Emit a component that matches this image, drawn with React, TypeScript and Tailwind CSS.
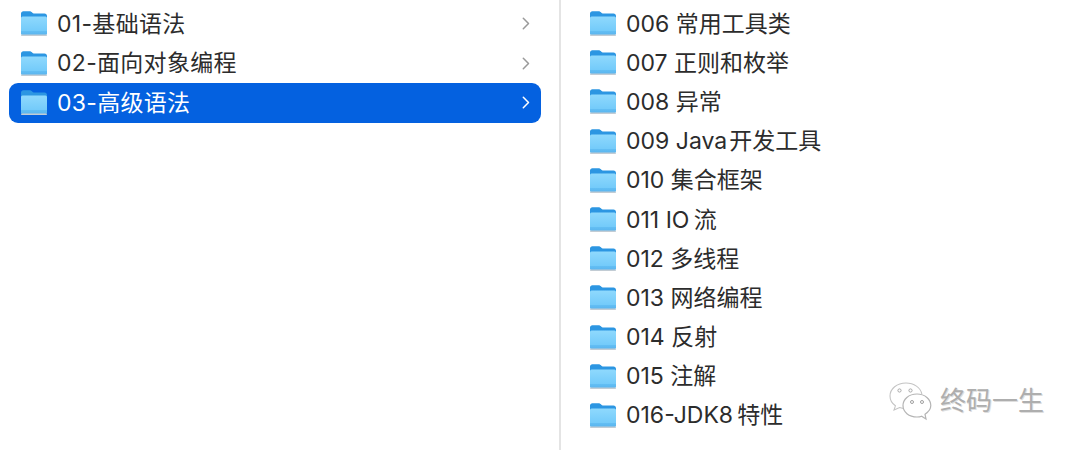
const leftItems = ["01-基础语法", "02-面向对象编程", "03-高级语法"];

const rightItems = [
  "006 常用工具类",
  "007 正则和枚举",
  "008 异常",
  "009 Java\u200a开发工具",
  "010 集合框架",
  "011 IO\u2009流",
  "012 多线程",
  "013 网络编程",
  "014 反射",
  "015 注解",
  "016-JDK8\u2009特性",
];

const fontStack = "[font-family:'Inter','Noto_Sans_CJK_SC',sans-serif]";

function FolderIcon() {
  return (
    <svg width="28" height="27" viewBox="0 0 28 27" className="shrink-0">
      <defs>
        <linearGradient id="folderBody" x1="0" y1="0" x2="0" y2="1">
          <stop offset="0" stopColor="#8fd9fd" />
          <stop offset="0.76" stopColor="#74cbfa" />
          <stop offset="0.78" stopColor="#63bff4" />
          <stop offset="1" stopColor="#5ab4ee" />
        </linearGradient>
      </defs>
      <path
        d="M1 3.6C1 2.2 2 1.2 3.4 1.2H9.5C10.8 1.2 11.4 1.8 12.2 2.6C12.8 3.2 13.3 3.6 14.4 3.6H24.5C26 3.6 27 4.6 27 6.1V12H1Z"
        fill="#2c96e2"
      />
      <rect x="1" y="6.4" width="26" height="18.6" rx="1.5" fill="url(#folderBody)" />
      <rect x="1" y="24.6" width="26" height="1.4" rx="0.7" fill="#c2ccd4" />
    </svg>
  );
}

function Chevron({ active }: { active: boolean }) {
  return (
    <svg width="8" height="13" viewBox="0 0 8 13" fill="none" className="shrink-0">
      <path
        d="M1.3 1.2L6.5 6.5L1.3 11.8"
        stroke={active ? "#ffffff" : "#9a9a9a"}
        strokeWidth="1.5"
        strokeLinecap="round"
        strokeLinejoin="round"
      />
    </svg>
  );
}

function WeChatIcon() {
  return (
    <svg width="44" height="40" viewBox="0 0 44 40" fill="none">
      <path
        d="M18 2C9 2 2 7.6 2 15C2 19 4 22.4 7.4 24.8L6 29L11.6 26.6C13.4 27.2 15.2 27.6 17 27.6"
        fill="#fff"
        stroke="#c4c4c4"
        strokeWidth="1.1"
      />
      <path d="M18 2C26 2 32.6 6.6 33.8 13" stroke="#c4c4c4" strokeWidth="1.1" />
      <path
        d="M29 13C20.6 13 15 18.4 15 24.6C15 31 20.8 36 29 36C30.6 36 32.2 35.8 33.6 35.2L38 38L37 33.2C40.6 31 42.8 28 42.8 24.6C42.8 18.4 37 13 29 13Z"
        fill="#fff"
        stroke="#b4b4b4"
        strokeWidth="1.2"
      />
      <circle cx="11.5" cy="9.5" r="1.6" stroke="#a8a8a8" />
      <circle cx="22.5" cy="9.5" r="1.6" stroke="#a8a8a8" />
      <circle cx="24" cy="21" r="1.5" stroke="#a0a0a0" />
      <circle cx="34" cy="21" r="1.5" stroke="#a0a0a0" />
    </svg>
  );
}

export default function App() {
  return (
    <div className={`relative flex h-[450px] w-[1080px] overflow-hidden bg-white text-[23px] text-[#2c2c2c] ${fontStack}`}>
      {/* 左カラム */}
      <div className="h-full w-[561px] shrink-0 border-r-2 border-[#e4e4e4] pl-[9px] pr-[18px] pt-[4px]">
        {leftItems.map((name, i) => {
          const active = i === 2;
          return (
            <div
              key={name}
              className={`flex h-[39.5px] items-center rounded-[9px] pl-[11px] pr-[11px] ${
                active ? "bg-[#0461e0] text-white" : ""
              }`}
            >
              <FolderIcon />
              <span className="ml-[9px] flex-1 whitespace-nowrap pt-[1px] leading-none tracking-[0.3px]">{name}</span>
              <Chevron active={active} />
            </div>
          );
        })}
      </div>

      {/* 右カラム */}
      <div className="flex-1 pl-[28px] pt-[4px]">
        {rightItems.map((name) => (
          <div key={name} className="flex h-[39.2px] items-center">
            <FolderIcon />
            <span className="ml-[9px] whitespace-nowrap pt-[1px] leading-none">{name}</span>
          </div>
        ))}
      </div>

      {/* 透かし */}
      <div className="absolute left-[888px] top-[381px] flex items-center gap-[8px] text-[26px] text-[#aeaeae] [text-shadow:1px_1px_0_#dedede]">
        <WeChatIcon />
        <span className="leading-none">终码一生</span>
      </div>
    </div>
  );
}
